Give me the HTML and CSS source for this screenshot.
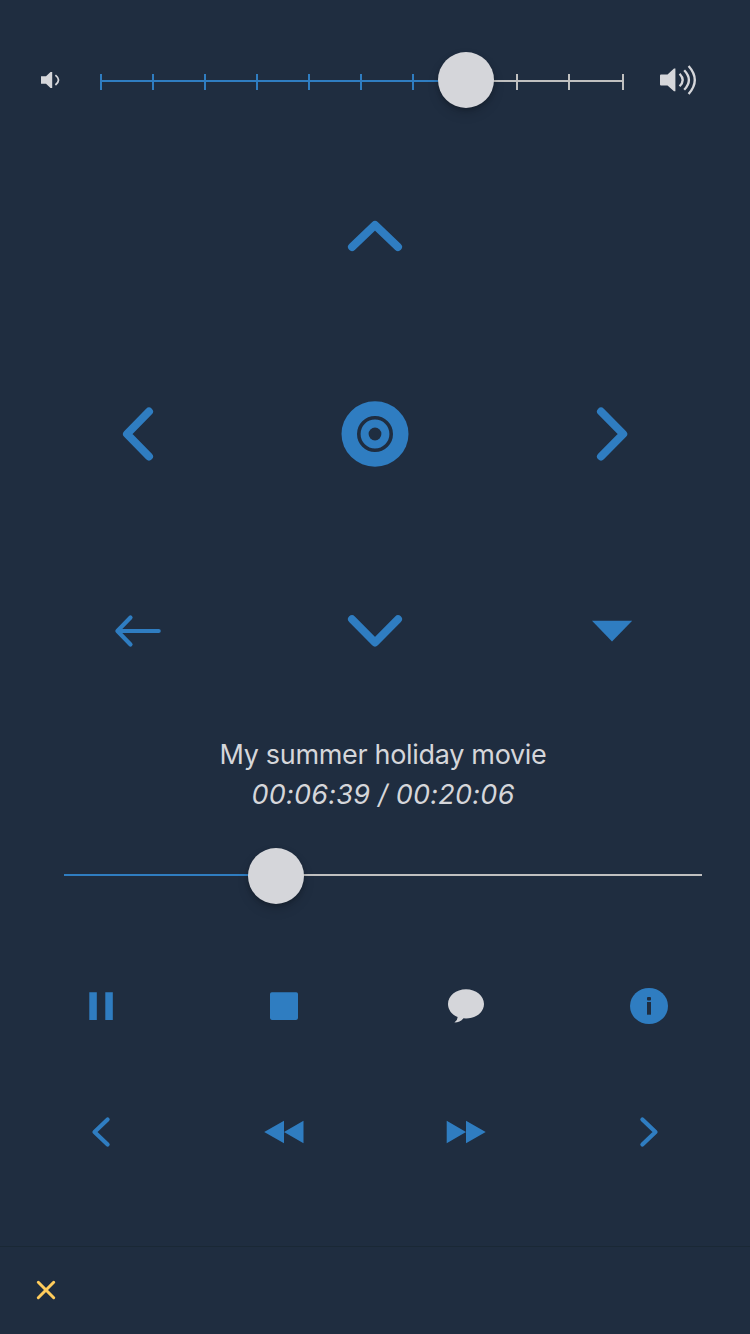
FILE: index.html
```html
<!DOCTYPE html>
<html lang="en">
<head>
<meta charset="utf-8">
<title>Remote control</title>
<link rel="stylesheet" href="styles.css">
</head>
<body>
<main class="remote">
  <section class="volume">
    <svg class="volume-low" viewBox="0 0 20 18"><path class="light" d="M1 5.200h5L10.500 1h1.700v16h-1.700L6 12.800H1z"/><path class="wave" d="M15.400 4.100Q21.600 9 15.400 14"/></svg>
    <div class="slider volume-slider">
      <svg class="ticks" viewBox="0 0 524 16">
        <path class="blue" d="M0 6h366v2H0zM0 0h2v16H0zM52 0h2v16h-2zM104 0h2v16h-2zM156 0h2v16h-2zM208 0h2v16h-2zM260 0h2v16h-2zM312 0h2v16h-2z"/>
        <path class="gray" d="M366 6h158v2H366zM416 0h2v16h-2zM468 0h2v16h-2zM522 0h2v16h-2z"/>
      </svg>
      <span class="knob volume-knob"></span>
    </div>
    <svg class="volume-high" viewBox="0 0 40 32"><path class="light" d="M2 10.600h6.500l6.500-6H16.400v22.700H15L8.500 21.500H2q-1 0-1-1v-9q0-.9 1-.9z"/><path class="wave loud" d="M20.600 9.700Q26.800 16 20.600 22.300M25.200 6.300Q34.600 16 25.200 25.800M29.600 2Q42 16 29.600 30"/></svg>
  </section>

  <section class="pad">
    <svg class="icon up" viewBox="-40 -40 80 80"><path class="thick" d="M-23 11 0-11 23 11"/></svg>
    <svg class="icon left" viewBox="-40 -40 80 80"><path class="thick" d="M11-22.500-11 0 11 22.500"/></svg>
    <svg class="icon" viewBox="-40 -40 80 80"><ellipse class="blue" rx="33.500" ry="32.700"/><circle class="ring" r="16.200"/><circle class="dark" r="6.400"/></svg>
    <svg class="icon" viewBox="-40 -40 80 80"><path class="thick" d="M-11-22.500 11.200 0-11 22.500"/></svg>
    <svg class="icon" viewBox="-40 -40 80 80"><path class="thin" d="M-7.500-14.500-20.600-1-7.500 12.500M-20-1H20.700"/></svg>
    <svg class="icon" viewBox="-40 -40 80 80"><path class="thick" d="M-23-12.800 0 10.500 23-12.800"/></svg>
    <svg class="icon" viewBox="-40 -40 80 80"><path class="blue" d="M-20-11.300H20.200L0 9.500z"/></svg>
  </section>

  <section class="media">
    <div class="title">My summer holiday movie</div>
    <div class="time">00:06:39 / 00:20:06</div>
    <div class="slider seek"><span class="seek-played"></span><span class="seek-rest"></span><span class="knob seek-knob"></span></div>
  </section>

  <section class="controls">
    <svg class="icon" viewBox="-40 -40 80 80"><path class="blue" d="M-11.700-13.800h7.500v27.800h-7.500zM4.300-13.800h7.500v27.800H4.300z"/></svg>
    <svg class="icon" viewBox="-40 -40 80 80"><rect class="blue" x="-14" y="-13.800" width="28" height="27.700" rx="1.800"/></svg>
    <svg class="icon" viewBox="-40 -40 80 80"><path class="light" d="M0-16.700C10-16.700 18-10.300 18-2S10 12.500 0 12.500L-2.500 12.300Q-6 16.600-11.600 16.600Q-8.200 14.300-8.400 11C-14.500 8.500-18 3.500-18-2C-18-10.300-10-16.700 0-16.700z"/></svg>
    <svg class="icon" viewBox="-40 -40 80 80"><ellipse class="blue" rx="19" ry="18"/><rect class="dark" x="-2" y="-9" width="4" height="3.400" rx="1"/><path class="dark" d="M-2-4h4V8.700h-4z"/></svg>
    <svg class="icon" viewBox="-40 -40 80 80"><path class="thin" d="M6.600-12.500-6.500 0 6.600 12.500"/></svg>
    <svg class="icon" viewBox="-40 -40 80 80"><path class="blue" d="M-19.800 0 0-11.300v22.600zM0 0l19.500-11.300v22.600z"/></svg>
    <svg class="icon" viewBox="-40 -40 80 80"><path class="blue" d="M19.700 0 0-11.300v22.600zM0 0l-19.300-11.300v22.600z"/></svg>
    <svg class="icon" viewBox="-40 -40 80 80"><path class="thin" d="M-6.600-12.500 6.500 0-6.600 12.500"/></svg>
  </section>

  <footer class="footer">
    <svg class="close" viewBox="0 0 20 20"><path d="M2.300 2.300l15.400 15.400M17.700 2.300L2.300 17.700"/></svg>
  </footer>
</main>
</body>
</html>
```

FILE: styles.css
```css
* { box-sizing: border-box; }
body {
  margin: 0;
  background: #1f2d40;
  color: #d5d6da;
  font-family: Inter, "Liberation Sans", sans-serif;
}
.remote {
  display: flex;
  flex-direction: column;
  width: 750px;
  height: 1334px;
  overflow: hidden;
}
svg { display: block; flex: none; }

.blue { fill: #2f7dc1; }
.light { fill: #d5d6da; }
.gray { fill: #c0c0c0; }
.dark { fill: #1f2d40; }
.ring { fill: none; stroke: #1f2d40; stroke-width: 3.6; }
.thick, .thin {
  fill: none;
  stroke: #2f7dc1;
  stroke-linecap: round;
  stroke-linejoin: round;
}
.thick { stroke-width: 8; }
.thin { stroke-width: 4.2; }
.wave { fill: none; stroke: #d5d6da; stroke-width: 1.8; }
.wave.loud { stroke-width: 2.3; }

.volume {
  display: flex;
  align-items: center;
  height: 137px;
  padding: 23px 51px 0 40px;
}
.volume-low { width: 20px; height: 18px; }
.volume-high { width: 40px; height: 32px; }
.volume-slider { width: 524px; height: 16px; margin: 4px 35px 0 40px; }
.ticks { width: 524px; height: 16px; }

.slider { position: relative; }
.knob {
  position: absolute;
  width: 56px;
  height: 56px;
  border-radius: 50%;
  background: #d5d6da;
  box-shadow: 0 6px 12px rgba(0, 0, 0, .13), 0 2px 4px rgba(0, 0, 0, .2);
}
.volume-knob { left: 338px; top: -22px; }

.pad {
  display: grid;
  grid-template-columns: repeat(3, 237px);
  grid-template-rows: repeat(3, 198px);
  place-items: center;
  padding: 0 19.5px;
}
.icon { width: 80px; height: 80px; }
.up { grid-column: 2; }
.left { grid-column: 1; }

.media {
  height: 212px;
  padding: 4px 48px 0 64px;
  text-align: center;
  white-space: nowrap;
}
.title, .time { height: 40px; line-height: 40px; font-size: 27px; }
.title { letter-spacing: -.32px; }
.time { font-style: italic; letter-spacing: .25px; }
.seek { display: flex; height: 2px; margin-top: 59px; }
.seek-played { width: 212px; background: #2f7dc1; }
.seek-rest { flex: 1; background: #c0c0c0; }
.seek-knob { left: 184px; top: -26px; }

.controls {
  display: grid;
  grid-template-columns: repeat(4, 182.67px);
  grid-template-rows: repeat(2, 126px);
  place-items: center;
  justify-content: center;
}

.footer {
  display: flex;
  align-items: center;
  height: 88px;
  margin-top: auto;
  padding: 0 0 1px 36px;
  border-top: 1px solid #1a2835;
}
.close { width: 20px; height: 20px; }
.close path { fill: none; stroke: #ffcc5c; stroke-width: 3; stroke-linecap: round; }
```
